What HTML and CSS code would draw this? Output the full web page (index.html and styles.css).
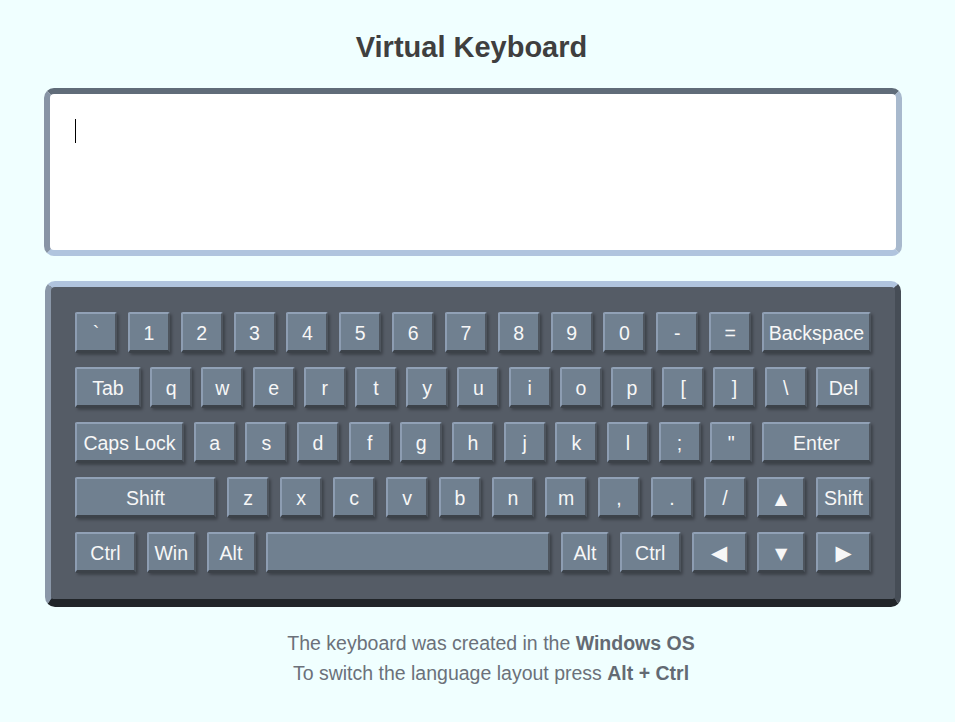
FILE: index.html
```html
<!DOCTYPE html>
<html lang="en">
<head>
<meta charset="utf-8">
<title>Virtual Keyboard</title>
<link rel="stylesheet" href="styles.css">
</head>
<body>
<main class="page">
  <h1 class="title">Virtual Keyboard</h1>
  <div class="screen"><span class="caret"></span></div>
  <div class="keyboard">
    <div class="row">
      <div class="key">`</div><div class="key">1</div><div class="key">2</div><div class="key">3</div><div class="key">4</div><div class="key">5</div><div class="key">6</div><div class="key">7</div><div class="key">8</div><div class="key">9</div><div class="key">0</div><div class="key">-</div><div class="key">=</div><div class="key w109">Backspace</div>
    </div>
    <div class="row">
      <div class="key w66">Tab</div><div class="key">q</div><div class="key">w</div><div class="key">e</div><div class="key">r</div><div class="key">t</div><div class="key">y</div><div class="key">u</div><div class="key">i</div><div class="key">o</div><div class="key">p</div><div class="key">[</div><div class="key">]</div><div class="key">\</div><div class="key w55">Del</div>
    </div>
    <div class="row">
      <div class="key w109">Caps Lock</div><div class="key">a</div><div class="key">s</div><div class="key">d</div><div class="key">f</div><div class="key">g</div><div class="key">h</div><div class="key">j</div><div class="key">k</div><div class="key">l</div><div class="key">;</div><div class="key">"</div><div class="key w109">Enter</div>
    </div>
    <div class="row">
      <div class="key w141">Shift</div><div class="key">z</div><div class="key">x</div><div class="key">c</div><div class="key">v</div><div class="key">b</div><div class="key">n</div><div class="key">m</div><div class="key">,</div><div class="key">.</div><div class="key">/</div><div class="key w48 arrow">▲</div><div class="key w55">Shift</div>
    </div>
    <div class="row">
      <div class="key w61">Ctrl</div><div class="key w49">Win</div><div class="key w49">Alt</div><div class="key w284"></div><div class="key w48">Alt</div><div class="key w61">Ctrl</div><div class="key w55 arrow side">◀</div><div class="key w48 arrow">▼</div><div class="key w55 arrow side">▶</div>
    </div>
  </div>
  <div class="note">
    <p>The keyboard was created in the <b>Windows OS</b></p>
    <p>To switch the language layout press <b>Alt + Ctrl</b></p>
  </div>
</main>
</body>
</html>
```

FILE: styles.css
```css
html, body {
  margin: 0;
  padding: 0;
}
body {
  background: #f0ffff;
  font-family: "Liberation Sans", Arial, sans-serif;
}
.page {
  display: flex;
  flex-direction: column;
  padding-left: 44px;
  width: 858px;
}
.title {
  margin: 0;
  padding-top: 31px;
  font-size: 29px;
  line-height: 32px;
  font-weight: bold;
  color: #3f3f3f;
  text-align: center;
  padding-right: 3px;
}
.screen {
  box-sizing: border-box;
  margin-top: 25px;
  height: 168px;
  width: 858px;
  background: #fff;
  border-style: solid;
  border-width: 6px;
  border-top-color: #606c79;
  border-left-color: #8794a5;
  border-right-color: #a8b9cd;
  border-bottom-color: #b0c4de;
  border-radius: 10px;
  padding: 25px 25px;
}
.caret {
  display: block;
  width: 1px;
  height: 24px;
  background: #000;
}
.keyboard {
  box-sizing: border-box;
  margin-top: 25px;
  margin-left: 1px;
  width: 856px;
  height: 326px;
  background: #555c66;
  border-style: solid;
  border-width: 6px 6px 8px 6px;
  border-top-color: #b0c4de;
  border-left-color: #8a97a8;
  border-right-color: #464d56;
  border-bottom-color: #212529;
  border-radius: 10px;
  padding: 25px 24px 25px 24px;
  display: flex;
  flex-direction: column;
  gap: 14px;
}
.row {
  display: flex;
  justify-content: space-between;
}
.key {
  box-sizing: border-box;
  width: 42px;
  height: 41px;
  flex: none;
  background: #708090;
  border-style: solid;
  border-width: 2px 2px 3px 2px;
  border-top-color: #91a1b6;
  border-left-color: #8d9db2;
  border-right-color: #4e555e;
  border-bottom-color: #3c4249;
  border-radius: 2px;
  box-shadow: 2px 2px 3px rgba(0, 0, 0, 0.28);
  color: #f7f7f7;
  font-size: 19.5px;
  display: flex;
  align-items: center;
  justify-content: center;
  line-height: 1;
  padding-top: 3px;
}
.arrow {
  font-family: "DejaVu Sans", sans-serif;
  font-size: 16px;
}
.arrow.side {
  font-size: 21px;
}
.w48 { width: 48px; }
.w49 { width: 49px; }
.w55 { width: 55px; }
.w61 { width: 61px; }
.w66 { width: 66px; }
.w109 { width: 109px; }
.w141 { width: 141px; }
.w284 { width: 284px; }
.note {
  margin-top: 21px;
  text-align: center;
  color: #6b717a;
  font-size: 19.5px;
  line-height: 30px;
  padding-left: 36px;
}
.note p {
  margin: 0;
}
.note b {
  color: #636a73;
}
```
